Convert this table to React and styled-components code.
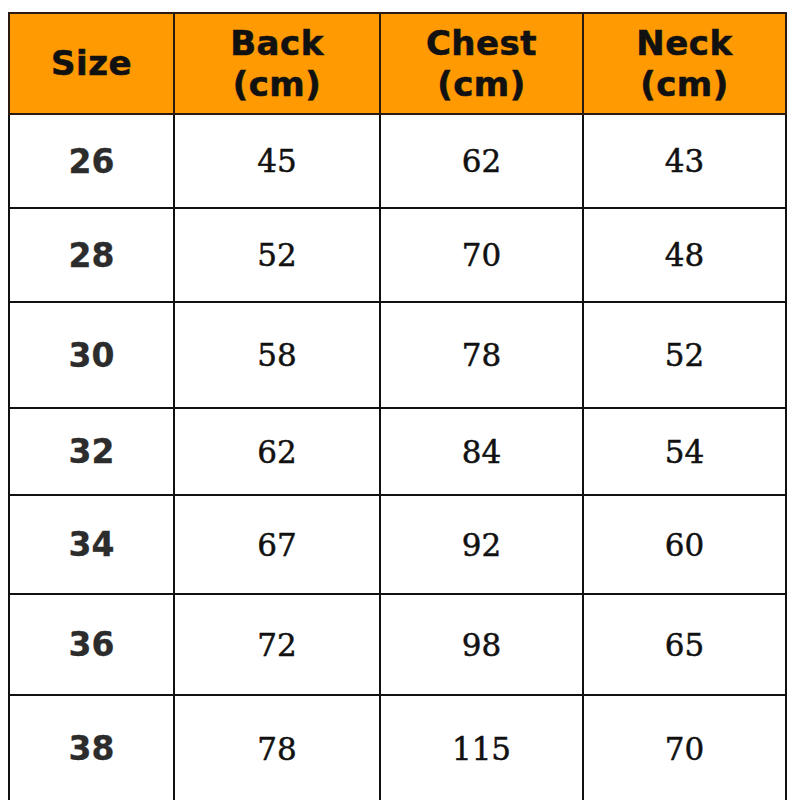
import React from 'react'
import styled, { createGlobalStyle } from 'styled-components'

const GlobalStyle = createGlobalStyle`
    html, body {
        margin: 0;
        padding: 0;
        background: #ffffff;
        overflow: hidden;
    }
`

const Page = styled.div`
    padding: 12px 0 0 8px;
    height: 800px;
    box-sizing: border-box;
`

const Table = styled.table`
    width: 779px;
    border-collapse: collapse;
    table-layout: fixed;
    border: 2px solid #111;
`

const HeadCell = styled.th`
    background: #ff9a02;
    border: 2px solid #2a1a10;
    height: 99px;
    padding: 0;
    font-family: 'DejaVu Sans', Verdana, sans-serif;
    font-weight: bold;
    font-size: 34px;
    letter-spacing: 0.5px;
    line-height: 41px;
    color: #111;
    text-align: center;
    vertical-align: middle;
    -webkit-text-stroke: 0.6px #111;
`

const Cell = styled.td`
    border: 2px solid #111;
    height: ${(p) => p.$h}px;
    padding: 0;
    text-align: center;
    vertical-align: middle;
    font-family: ${(p) =>
        p.$size ? "'DejaVu Sans', Verdana, sans-serif" : "'DejaVu Serif', Georgia, serif"};
    font-weight: ${(p) => (p.$size ? 'bold' : 'normal')};
    font-size: ${(p) => (p.$size ? 33 : 31)}px;
    color: ${(p) => (p.$size ? '#2c2c2c' : '#111')};
    -webkit-text-stroke: ${(p) => (p.$size ? 0.3 : 0.5)}px currentColor;
`

const columns = [
    { label: ['Size'], width: 165 },
    { label: ['Back', '(cm)'], width: 206 },
    { label: ['Chest', '(cm)'], width: 203 },
    { label: ['Neck', '(cm)'], width: 203 },
]

const rows = [
    { h: 92, v: ['26', '45', '62', '43'] },
    { h: 92, v: ['28', '52', '70', '48'] },
    { h: 104, v: ['30', '58', '78', '52'] },
    { h: 85, v: ['32', '62', '84', '54'] },
    { h: 97, v: ['34', '67', '92', '60'] },
    { h: 99, v: ['36', '72', '98', '65'] },
    { h: 105, v: ['38', '78', '115', '70'] },
]

function App() {
    return (
        <React.Fragment>
            <GlobalStyle />
            <Page>
                <Table>
                    <colgroup>
                        {columns.map((c) => (
                            <col key={c.label[0]} style={{ width: c.width }} />
                        ))}
                    </colgroup>
                    <thead>
                        <tr>
                            {columns.map((c) => (
                                <HeadCell key={c.label[0]}>
                                    {c.label.map((line, i) => (
                                        <div key={i}>{line}</div>
                                    ))}
                                </HeadCell>
                            ))}
                        </tr>
                    </thead>
                    <tbody>
                        {rows.map((r) => (
                            <tr key={r.v[0]}>
                                {r.v.map((val, i) => (
                                    <Cell key={i} $h={r.h} $size={i === 0}>
                                        {val}
                                    </Cell>
                                ))}
                            </tr>
                        ))}
                    </tbody>
                </Table>
            </Page>
        </React.Fragment>
    )
}

export default App
